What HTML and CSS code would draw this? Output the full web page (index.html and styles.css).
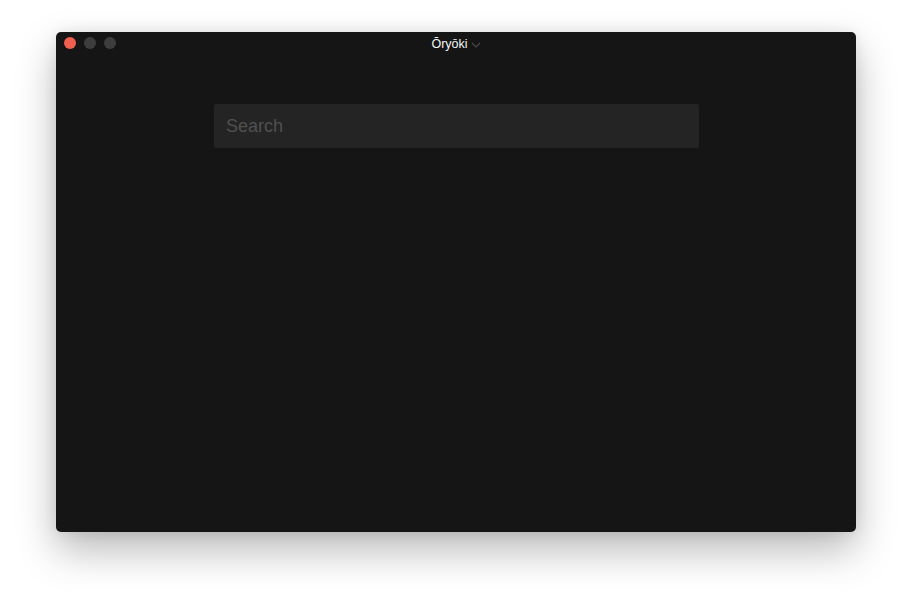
FILE: index.html
```html
<!DOCTYPE html>
<html>
<head>
<meta charset="utf-8">
<link rel="stylesheet" href="styles.css">
</head>
<body>
<div class="stage">
  <div class="window">
    <div class="titlebar">
      <div class="lights">
        <span class="light close"></span>
        <span class="light"></span>
        <span class="light"></span>
      </div>
      <div class="title">Ōryōki<svg class="chev" width="10" height="6" viewBox="0 0 10 6"><path d="M1 1 L5 5 L9 1" fill="none" stroke="#4a4a4a" stroke-width="1.1"/></svg></div>
    </div>
    <div class="content">
      <div class="search">Search</div>
    </div>
  </div>
</div>
</body>
</html>
```
FILE: styles.css
```css
html, body {
  margin: 0;
  padding: 0;
  background: #ffffff;
  width: 912px;
  height: 612px;
  overflow: hidden;
  font-family: "Liberation Sans", Arial, sans-serif;
}
.stage {
  padding: 32px 56px 0 56px;
}
.window {
  width: 800px;
  height: 500px;
  background: #151515;
  border-radius: 5px;
  box-shadow: 0 18px 40px rgba(0, 0, 0, 0.28), 0 0 14px rgba(0, 0, 0, 0.08);
  position: relative;
  overflow: hidden;
}
.titlebar {
  height: 22px;
  display: flex;
  align-items: center;
  justify-content: center;
  position: relative;
}
.lights {
  position: absolute;
  left: 8px;
  top: 5px;
  display: flex;
  gap: 8px;
}
.light {
  width: 12px;
  height: 12px;
  border-radius: 50%;
  background: #3d3d3d;
}
.light.close {
  background: #f0604f;
}
.title {
  color: #f4f4f4;
  font-size: 12.5px;
  display: flex;
  align-items: center;
  gap: 3px;
  margin-top: 1px;
}
.chev {
  margin-top: 2px;
}
.content {
  padding: 50px 0 0 158px;
}
.search {
  width: 485px;
  height: 44px;
  background: #242424;
  border-radius: 2px;
  box-sizing: border-box;
  padding: 0 12px;
  display: flex;
  align-items: center;
  font-family: "Liberation Sans", Arial, sans-serif;
  font-size: 18px;
  color: #505050;
}
```
